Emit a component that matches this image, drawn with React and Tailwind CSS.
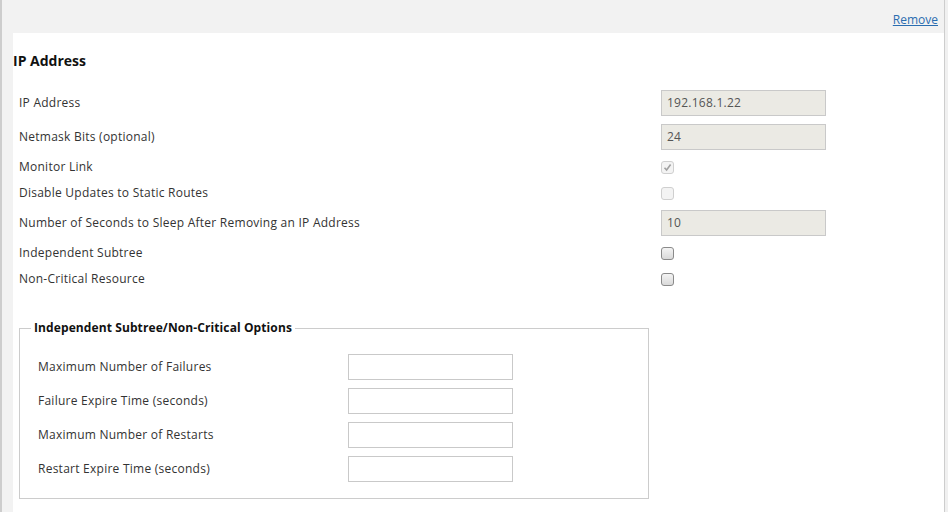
import React from "react";

const rows = [
  { label: "IP Address", type: "input", value: "192.168.1.22" },
  { label: "Netmask Bits (optional)", type: "input", value: "24" },
  { label: "Monitor Link", type: "check", checked: true, disabled: true },
  { label: "Disable Updates to Static Routes", type: "check", disabled: true },
  { label: "Number of Seconds to Sleep After Removing an IP Address", type: "input", value: "10" },
  { label: "Independent Subtree", type: "check" },
  { label: "Non-Critical Resource", type: "check" },
];

const options = [
  "Maximum Number of Failures",
  "Failure Expire Time (seconds)",
  "Maximum Number of Restarts",
  "Restart Expire Time (seconds)",
];

function Checkbox({ checked, disabled }) {
  if (disabled) {
    return (
      <span className="flex h-[13px] w-[13px] items-center justify-center rounded-[3px] border border-[#cfcfcf] bg-[#f3f3f3]">
        {checked && (
          <svg width="9" height="9" viewBox="0 0 9 9">
            <path d="M1.5 4.8 L3.6 7 L7.6 1.6" fill="none" stroke="#a0a0a0" strokeWidth="1.6" />
          </svg>
        )}
      </span>
    );
  }
  return (
    <span className="h-[13px] w-[13px] rounded-[3px] border border-[#8a8a8a] bg-gradient-to-b from-[#f4f4f4] to-[#d9d9d9]" />
  );
}

export default function App() {
  return (
    <div className="flex h-screen w-full bg-[#f0f0f0] font-['Open_Sans',sans-serif] text-[12px] text-[#333]">
      <div className="flex w-[945px] flex-col border-l-2 border-r border-[#cdcdcd] bg-[#f2f2f2]">
        <div className="flex h-[33px] items-center justify-end pr-[6px] pt-[7px]">
          <a href="#" className="text-[12px] text-[#2a6db0] underline">
            Remove
          </a>
        </div>

        <div className="ml-[11px] flex-1 bg-white pt-[18px]">
          <h2 className="text-[14px] font-bold leading-[20px] text-[#111]">IP Address</h2>

          <div className="mt-[15px] pl-[6px] tracking-[0.25px]">
            {rows.map((row) => (
              <div
                key={row.label}
                className={`flex items-center ${row.type === "input" ? "h-[34px]" : "h-[26px]"}`}
              >
                <div className="w-[642px]">{row.label}</div>
                {row.type === "input" ? (
                  <div className="flex h-[26px] w-[165px] items-center border border-[#c9c9c9] bg-[#ebeae4] pl-[5px] text-[#555]">
                    {row.value}
                  </div>
                ) : (
                  <Checkbox checked={row.checked} disabled={row.disabled} />
                )}
              </div>
            ))}
          </div>

          <fieldset className="ml-[6px] mt-[29px] h-[178px] w-[630px] border border-[#cccccc] px-[11px]">
            <legend className="px-[3px] text-[12px] font-bold leading-[14px] tracking-[0.1px] text-[#111]">
              Independent Subtree/Non-Critical Options
            </legend>
            <div className="mt-[15px] pl-[7px] tracking-[0.25px]">
              {options.map((label) => (
                <div key={label} className="flex h-[34px] items-center">
                  <div className="w-[310px]">{label}</div>
                  <div className="h-[26px] w-[165px] border border-[#c9c9c9] bg-white" />
                </div>
              ))}
            </div>
          </fieldset>
        </div>
      </div>
    </div>
  );
}
